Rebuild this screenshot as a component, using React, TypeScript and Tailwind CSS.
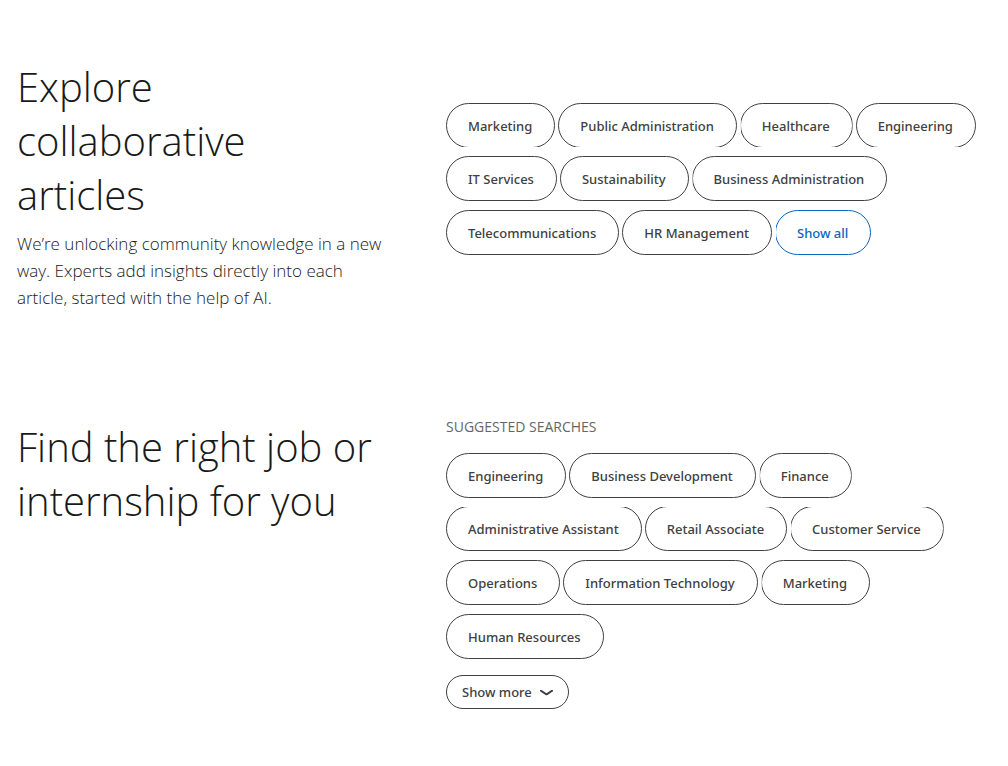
import React from 'react';

type Clip = 'top' | 'bottom';
type Chip = { label: string; clip?: Clip; cutLeft?: boolean; accent?: boolean };

const articleTopics: Chip[] = [
  { label: 'Marketing', clip: 'bottom' },
  { label: 'Public Administration', clip: 'bottom' },
  { label: 'Healthcare', clip: 'bottom', cutLeft: true },
  { label: 'Engineering', clip: 'bottom' },
  { label: 'IT Services' },
  { label: 'Sustainability' },
  { label: 'Business Administration', cutLeft: true },
  { label: 'Telecommunications' },
  { label: 'HR Management' },
  { label: 'Show all', accent: true, cutLeft: true },
];

const jobSearches: Chip[] = [
  { label: 'Engineering' },
  { label: 'Business Development' },
  { label: 'Finance', cutLeft: true },
  { label: 'Administrative Assistant', clip: 'top' },
  { label: 'Retail Associate', clip: 'top' },
  { label: 'Customer Service', clip: 'top', cutLeft: true },
  { label: 'Operations' },
  { label: 'Information Technology' },
  { label: 'Marketing', cutLeft: true },
  { label: 'Human Resources' },
];

function ChipList({ chips }: { chips: Chip[] }) {
  return (
    <ul className="flex flex-wrap gap-x-[3px] gap-y-[9px]">
      {chips.map(({ label, clip, cutLeft, accent }) => (
        <li
          key={label}
          className={`flex overflow-hidden ${clip ? 'h-11' : 'h-[45px]'} ${
            clip === 'top' ? 'items-end' : 'items-start'
          }`}
        >
          <a
            href="#"
            className={`flex h-[45px] shrink-0 items-center rounded-full border pr-[22px] pl-[21px] font-['Noto_Sans','Open_Sans',sans-serif] text-[13px] leading-5 font-medium whitespace-nowrap ${
              accent ? 'border-[#0a66c2] text-[#0a66c2]' : 'border-[#404040] text-[#404040]'
            } ${cutLeft ? '[clip-path:inset(0_0_0_1px)]' : ''}`}
          >
            {label}
          </a>
        </li>
      ))}
    </ul>
  );
}

function Section({ title, text, children }: { title: string; text?: string; children: React.ReactNode }) {
  return (
    <section className="grid grid-cols-[366fr_545fr] gap-x-[63px]">
      <div>
        <h2 className="text-[40px] leading-[54px] font-light text-[#191919]">{title}</h2>
        {text && <p className="mt-2 text-[17px] leading-[27px] font-light text-[#191919]">{text}</p>}
      </div>
      <div>{children}</div>
    </section>
  );
}

export default function App() {
  return (
    <main className="flex flex-col gap-[109px] bg-white px-[17px] pt-[60px] pb-14 font-['Open_Sans','Noto_Sans',sans-serif]">
      <Section
        title="Explore collaborative articles"
        text="We’re unlocking community knowledge in a new way. Experts add insights directly into each article, started with the help of AI."
      >
        <div className="pt-[43px]">
          <ChipList chips={articleTopics} />
        </div>
      </Section>
      <Section title="Find the right job or internship for you">
        <h3 className="mb-5 text-[14px] leading-[13px] font-normal text-[#666666] uppercase">
          Suggested searches
        </h3>
        <ChipList chips={jobSearches} />
        <button
          type="button"
          className="mt-4 flex h-[34px] items-center gap-2 rounded-full border border-[#404040] px-[15px] font-['Noto_Sans','Open_Sans',sans-serif] text-[13px] leading-5 font-medium text-[#404040]"
        >
          Show more
          <svg viewBox="0 0 13 8" className="h-2 w-[13px]" fill="currentColor" aria-hidden="true">
            <path d="M0 2 H1.6 L6.5 5.3 L11.4 2 H13 V3.2 L7.5 7 Q6.5 7.6 5.5 7 L0 3.2 Z" />
          </svg>
        </button>
      </Section>
    </main>
  );
}
